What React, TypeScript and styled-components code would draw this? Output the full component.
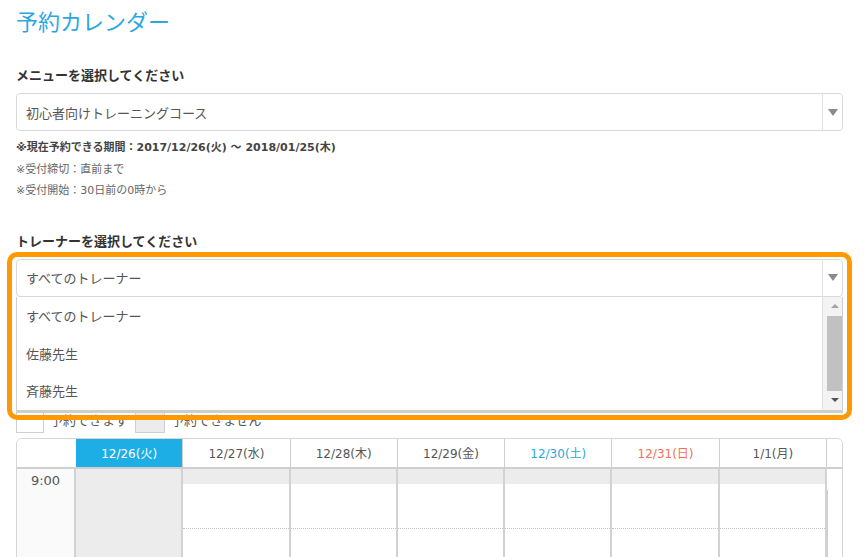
import React from "react";
import styled, { createGlobalStyle } from "styled-components";

const GlobalStyle = createGlobalStyle`
  html, body {
    margin: 0;
    padding: 0;
    overflow: hidden;
    background: #fff;
  }
  body {
    font-family: "DejaVu Sans", "Noto Sans CJK JP", sans-serif;
    color: #555;
  }
  * { box-sizing: border-box; }
`;

const days = [
  { label: "12/26(火)", kind: "today" },
  { label: "12/27(水)", kind: "weekday" },
  { label: "12/28(木)", kind: "weekday" },
  { label: "12/29(金)", kind: "weekday" },
  { label: "12/30(土)", kind: "sat" },
  { label: "12/31(日)", kind: "sun" },
  { label: "1/1(月)", kind: "weekday" },
];

const trainers = ["すべてのトレーナー", "佐藤先生", "斉藤先生"];

function App() {
  return (
    <>
      <GlobalStyle />
      <Page>
        <Title>予約カレンダー</Title>

        <FieldLabel>メニューを選択してください</FieldLabel>
        <Select>
          <SelectValue>初心者向けトレーニングコース</SelectValue>
          <SelectArrow>
            <Triangle />
          </SelectArrow>
        </Select>

        <Notes>
          <Note bold>※現在予約できる期間：2017/12/26(火) ～ 2018/01/25(木)</Note>
          <Note>※受付締切：直前まで</Note>
          <Note>※受付開始：30日前の0時から</Note>
        </Notes>

        <FieldLabel $gap={29}>トレーナーを選択してください</FieldLabel>
        <TrainerField>
          <Select>
            <SelectValue>すべてのトレーナー</SelectValue>
            <SelectArrow>
              <Triangle />
            </SelectArrow>
          </Select>
          <OptionList>
            <Options>
              {trainers.map((t) => (
                <OptionItem key={t}>{t}</OptionItem>
              ))}
            </Options>
            <ScrollTrack>
              <ScrollArrow $up />
              <ScrollThumb />
              <ScrollArrow />
            </ScrollTrack>
          </OptionList>
          <Highlight />
        </TrainerField>

        <Legend>
          <LegendItem>
            <LegendBox $w={28} />
            予約できます
          </LegendItem>
          <LegendItem>
            <LegendBox $w={30} $filled />
            予約できません
          </LegendItem>
        </Legend>

        <Calendar>
          <HeaderRow>
            <HeaderCell />
            {days.map((d) => (
              <HeaderCell key={d.label} $kind={d.kind}>
                {d.label}
              </HeaderCell>
            ))}
            <Gutter />
          </HeaderRow>
          <BodyRow>
            <TimeCell>9:00</TimeCell>
            {days.map((d) => (
              <DayColumn key={d.label} $closed={d.kind === "today"}>
                <SlotStrip />
                <Slot />
                <Slot />
              </DayColumn>
            ))}
            <BodyGutter />
          </BodyRow>
        </Calendar>
      </Page>
    </>
  );
}

export default App;

const Page = styled.div`
  padding: 4px 21px 0 16px;
  width: 864px;
`;

const Title = styled.h1`
  margin: 0;
  font-family: "Noto Sans CJK JP", sans-serif;
  font-weight: 400;
  font-size: 22px;
  line-height: 32px;
  color: #2aa7df;
`;

const FieldLabel = styled.div<{ $gap?: number }>`
  margin-top: ${({ $gap }) => $gap ?? 29}px;
  margin-bottom: 8px;
  font-family: "Noto Sans CJK JP", sans-serif;
  font-weight: 700;
  font-size: 13px;
  line-height: 20px;
  color: #333;
`;

const Select = styled.div`
  height: 38px;
  display: flex;
  align-items: stretch;
  background: #fff;
  border: 1px solid #d9d9d9;
  border-radius: 4px;
`;

const SelectValue = styled.div`
  flex: 1;
  display: flex;
  align-items: center;
  padding-left: 9px;
  font-family: "Noto Sans CJK JP", sans-serif;
  font-size: 13px;
  color: #555;
`;

const SelectArrow = styled.div`
  width: 20px;
  display: flex;
  align-items: center;
  justify-content: center;
  border-left: 1px solid #e3e3e3;
`;

const Triangle = styled.span`
  width: 0;
  height: 0;
  border-left: 5px solid transparent;
  border-right: 5px solid transparent;
  border-top: 7px solid #8a8a8a;
`;

const Notes = styled.div`
  margin-top: 6px;
`;

const Note = styled.div<{ bold?: boolean }>`
  font-size: 11px;
  line-height: 21.5px;
  font-weight: ${({ bold }) => (bold ? 700 : 400)};
  color: ${({ bold }) => (bold ? "#444" : "#666")};
`;

const TrainerField = styled.div`
  position: relative;
`;

const OptionList = styled.div`
  position: absolute;
  top: 100%;
  left: 0;
  right: 0;
  height: 116px;
  display: flex;
  background: #fff;
  border: 1px solid #cfcfcf;
  border-top: none;
  border-bottom: 3px solid #cdcdcd;
  z-index: 2;
`;

const Options = styled.div`
  flex: 1;
`;

const OptionItem = styled.div`
  height: 37.7px;
  display: flex;
  align-items: center;
  padding-left: 9px;
  font-family: "Noto Sans CJK JP", sans-serif;
  font-size: 13px;
  color: #555;
`;

const ScrollTrack = styled.div`
  width: 20px;
  display: flex;
  flex-direction: column;
  align-items: flex-end;
  background: #f3f3f3;
  border-left: 1px solid #e2e2e2;
`;

const ScrollArrow = styled.div<{ $up?: boolean }>`
  width: 15px;
  height: 19px;
  display: flex;
  align-items: center;
  justify-content: center;
  &::before {
    content: "";
    border-left: 4px solid transparent;
    border-right: 4px solid transparent;
    ${({ $up }) =>
      $up
        ? "border-bottom: 4px solid #a3a3a3;"
        : "border-top: 4px solid #505050;"}
  }
`;

const ScrollThumb = styled.div`
  width: 15px;
  flex: 1;
  background: #c1c1c1;
`;

const Highlight = styled.div`
  position: absolute;
  top: -7px;
  left: -9px;
  right: -9px;
  height: 168px;
  border: 5px solid #ff9900;
  border-radius: 10px;
  pointer-events: none;
  z-index: 3;
`;

const Legend = styled.div`
  margin-top: 115px;
  display: flex;
  gap: 6px;
  height: 21px;
`;

const LegendItem = styled.div`
  display: flex;
  align-items: flex-start;
  gap: 6px;
  width: 113px;
  white-space: nowrap;
  font-family: "Noto Sans CJK JP", sans-serif;
  font-size: 13px;
  line-height: 16px;
  color: #555;
`;

const LegendBox = styled.span<{ $w: number; $filled?: boolean }>`
  flex: none;
  width: ${({ $w }) => $w}px;
  height: 21px;
  border: 1px solid #cfcfcf;
  background: ${({ $filled }) => ($filled ? "#ececec" : "#fff")};
`;

const Calendar = styled.div`
  margin-top: 5px;
  border: 1px solid #d6d6d6;
  border-radius: 6px;
  overflow: hidden;
`;

const columns = "59px repeat(7, 1fr) 15px";

const HeaderRow = styled.div`
  display: grid;
  grid-template-columns: ${columns};
  height: 30px;
  border-bottom: 2px solid #cfcfcf;
`;

const headerColor = (kind?: string) =>
  kind === "today"
    ? "#fff"
    : kind === "sat"
    ? "#2aa7df"
    : kind === "sun"
    ? "#f2705a"
    : "#555";

const HeaderCell = styled.div<{ $kind?: string }>`
  display: flex;
  align-items: center;
  justify-content: center;
  font-size: 12px;
  color: ${({ $kind }) => headerColor($kind)};
  background: ${({ $kind }) => ($kind === "today" ? "#1eaee6" : "#fff")};
  border-right: 1px solid #cfcfcf;
  &:first-child {
    border-right: none;
  }
`;

const Gutter = styled.div`
  background: #fff;
`;

const BodyRow = styled.div`
  display: grid;
  grid-template-columns: ${columns};
  height: 200px;
`;

const TimeCell = styled.div`
  background: #fafafa;
  border-right: 2px solid #d2d2d2;
  text-align: center;
  padding-top: 3px;
  font-size: 13px;
  line-height: 18px;
  color: #555;
`;

const DayColumn = styled.div<{ $closed?: boolean }>`
  display: flex;
  flex-direction: column;
  background: ${({ $closed }) => ($closed ? "#ececec" : "#fff")};
  border-right: 2px solid #d2d2d2;
  & > * {
    visibility: ${({ $closed }) => ($closed ? "hidden" : "visible")};
  }
`;

const SlotStrip = styled.div`
  height: 15px;
  background: #ececec;
`;

const Slot = styled.div`
  height: 45px;
  border-bottom: 1px dotted #c4c4c4;
`;

const BodyGutter = styled.div`
  position: relative;
  background: #fff;
  &::before {
    content: "";
    position: absolute;
    left: 0;
    top: 21px;
    bottom: 0;
    width: 1px;
    background: #cfcfcf;
  }
`;
